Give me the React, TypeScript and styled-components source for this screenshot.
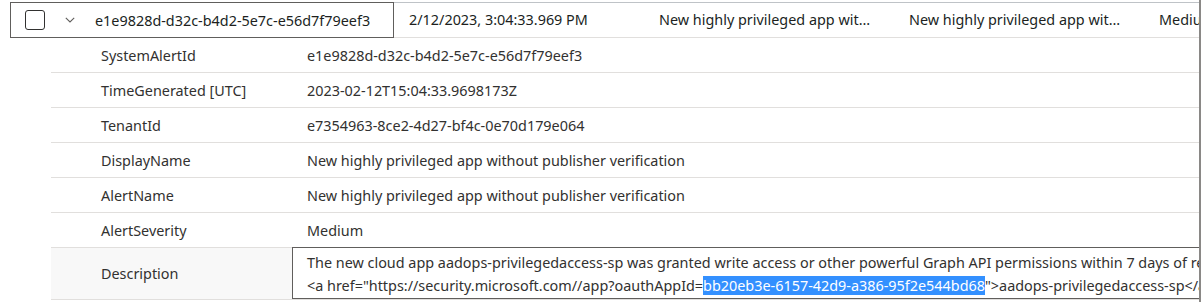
import styled, { createGlobalStyle } from 'styled-components';

const GlobalStyle = createGlobalStyle`
  html, body {
    margin: 0;
    padding: 0;
    background: #ffffff;
  }
  body {
    font-family: 'Noto Sans', 'Open Sans', sans-serif;
    font-size: 14.4px;
    color: #323130;
  }
`;

const alertId = 'e1e9828d-d32c-b4d2-5e7c-e56d7f79eef3';

const summaryCols = [
  '2/12/2023, 3:04:33.969 PM',
  'New highly privileged app without publisher verification',
  'New highly privileged app without publisher verification',
  'Medium',
];

const details = [
  { label: 'SystemAlertId', value: alertId },
  { label: 'TimeGenerated [UTC]', value: '2023-02-12T15:04:33.9698173Z' },
  { label: 'TenantId', value: 'e7354963-8ce2-4d27-bf4c-0e70d179e064' },
  { label: 'DisplayName', value: 'New highly privileged app without publisher verification' },
  { label: 'AlertName', value: 'New highly privileged app without publisher verification' },
  { label: 'AlertSeverity', value: 'Medium' },
];

const App = () => {
  return (
    <>
      <GlobalStyle />
      <Wrapper>
        <HeaderRow>
          <KeyCell>
            <Checkbox />
            <Chevron viewBox="0 0 10 6" aria-hidden>
              <path d="M0.8 0.8 L5 5 L9.2 0.8" />
            </Chevron>
            <KeyText>{alertId}</KeyText>
          </KeyCell>
          {summaryCols.map((c, i) => (
            <SummaryCell key={i}>{c}</SummaryCell>
          ))}
        </HeaderRow>
        <Details>
          {details.map((d) => (
            <DetailRow key={d.label}>
              <Label>{d.label}</Label>
              <Value>{d.value}</Value>
            </DetailRow>
          ))}
          <DetailRow $hover $tall>
            <Label>Description</Label>
            <EditBox>
              <Line>
                The new cloud app aadops-privilegedaccess-sp was granted write access or other powerful Graph API
                permissions within 7 days of registration.
              </Line>
              <Line>
                {'<a href="https://security.microsoft.com//app?oauthAppId='}
                <Selected>bb20eb3e-6157-42d9-a386-95f2e544bd68</Selected>
                {'">aadops-privilegedaccess-sp</a>'}
              </Line>
            </EditBox>
          </DetailRow>
        </Details>
      </Wrapper>
    </>
  );
};

const Wrapper = styled.div`
  width: 1201px;
  height: 302px;
  padding-top: 2px;
  box-sizing: border-box;
  border-right: 2px solid #8a8886;
  overflow: hidden;
`;

const HeaderRow = styled.div`
  display: flex;
  margin-left: 10px;
  height: 36px;
  white-space: nowrap;
`;

const KeyCell = styled.div`
  flex: 0 0 384px;
  box-sizing: border-box;
  border: 1px solid #605e5c;
  display: flex;
  align-items: center;
  padding-left: 14px;
  color: #201f1e;
`;

const Checkbox = styled.span`
  width: 20px;
  height: 20px;
  box-sizing: border-box;
  border: 1px solid #323130;
  border-radius: 3px;
  flex: none;
`;

const Chevron = styled.svg`
  width: 10px;
  height: 6px;
  margin-left: 20px;
  fill: none;
  stroke: #605e5c;
  stroke-width: 1.1;
  flex: none;
`;

const KeyText = styled.span`
  margin-left: 20px;
`;

const SummaryCell = styled.div`
  flex: 0 0 250px;
  box-sizing: border-box;
  padding: 0 16px 0 15px;
  border-top: 1px solid #bfc3c7;
  border-bottom: 1px solid #e1dfdd;
  line-height: 34px;
  overflow: hidden;
  text-overflow: ellipsis;
  color: #201f1e;
`;

const Details = styled.div`
  margin-left: 51px;
`;

const DetailRow = styled.div<{ $hover?: boolean; $tall?: boolean }>`
  display: flex;
  align-items: center;
  height: ${(p) => (p.$tall ? '51px' : '34px')};
  border-bottom: 1px solid #e1dfdd;
  background: ${(p) => (p.$hover ? '#f8f8f8' : 'transparent')};
  white-space: nowrap;
`;

const Label = styled.div`
  flex: 0 0 241px;
  box-sizing: border-box;
  padding-left: 50px;
`;

const Value = styled.div`
  padding-left: 15px;
`;

const EditBox = styled.div`
  align-self: flex-start;
  flex: 1;
  margin-top: -1px;
  height: 52px;
  box-sizing: border-box;
  border: 1px solid #605e5c;
  border-right: none;
  padding: 3px 0 0 14px;
  background: #ffffff;
  overflow: hidden;
`;

const Line = styled.div`
  line-height: 23px;
  white-space: nowrap;
`;

const Selected = styled.span`
  background: #3390ff;
  color: #ffffff;
`;

export default App;
